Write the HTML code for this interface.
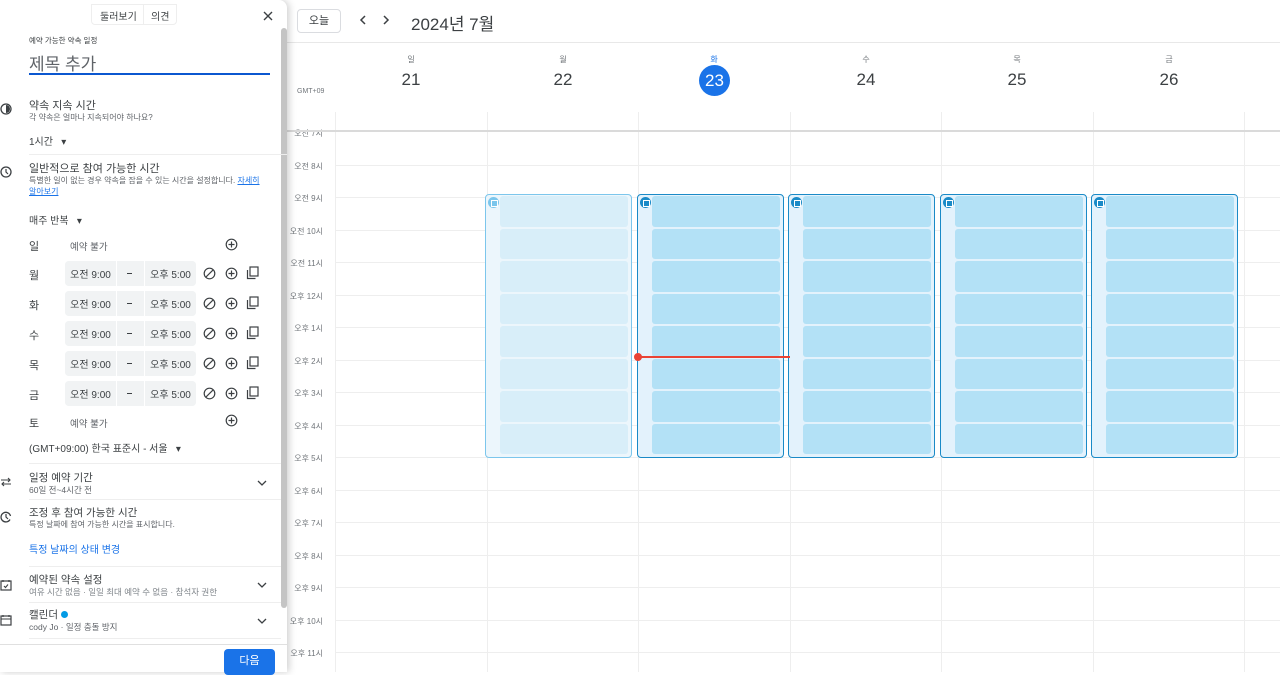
<!DOCTYPE html>
<html><head><meta charset="utf-8"><style>
*{box-sizing:border-box;margin:0;padding:0}
body{width:1280px;height:672px;overflow:hidden;background:#fff;font-family:"Liberation Sans","Noto Sans CJK KR",sans-serif;color:#3c4043;position:relative}
.a{position:absolute}
.panel{left:0;top:0;width:287px;height:672px;background:#fff;box-shadow:2px 0 8px rgba(0,0,0,.2);z-index:5;border-radius:0 8px 0 0}
.t{position:absolute;white-space:nowrap}
.hl{position:absolute;left:335px;right:0;height:1px;background:#eee}
.vl{position:absolute;top:112px;bottom:0;width:1px;background:#eee}
.hr{position:absolute;right:957px;font-size:8px;color:#70757a;text-align:right;width:60px}
.pill{position:absolute;height:25px;background:#f1f3f4;border-radius:4px;font-size:10px;color:#3c4043;display:flex;align-items:center;justify-content:center}
.day{position:absolute;left:29px;font-size:11px;color:#3c4043}
svg{position:absolute}
.blk{position:absolute;top:194px;height:264px;border:1.5px solid #1a8ac7;border-radius:4px;background:#e3f2fc}
.blk.l{border-color:#7cc6ec;background:#ecf6fc}
.slot{position:absolute;left:14px;right:3px;height:30.5px;background:#b3e1f6;border-radius:3px}
.blk.l .slot{background:#d8eef9}
.ic{position:absolute;left:2px;top:2px;width:11px;height:11px;border-radius:50%;background:#1a8ac7}
.blk.l .ic{background:#7cc6ec}
.ic:after{content:"";position:absolute;left:3px;top:3px;width:5px;height:5px;border:1px solid #fff}
.dn{position:absolute;width:150px;text-align:center;font-size:8px;color:#70757a;top:54px}
.dd{position:absolute;width:150px;text-align:center;font-size:17px;color:#3c4043;top:70px}
.chev{position:absolute;left:256px;width:12px;height:12px}
</style></head><body>
<div class="a" style="left:297px;top:9px;width:44px;height:24px;border:1px solid #dadce0;border-radius:4px;font-size:11px;text-align:center;line-height:22px">오늘</div>
<svg style="left:358px;top:14px" width="10" height="12" viewBox="0 0 10 12"><path d="M7 2L3 6L7 10" fill="none" stroke="#3c4043" stroke-width="1.5"/></svg>
<svg style="left:381px;top:14px" width="10" height="12" viewBox="0 0 10 12"><path d="M3 2L7 6L3 10" fill="none" stroke="#3c4043" stroke-width="1.5"/></svg>
<div class="t" style="left:411px;top:10px;font-size:17px;color:#3c4043">2024년 7월</div>
<div class="a" style="left:287px;right:0;top:42px;height:1px;background:#e8e8e8"></div>
<div class="dn" style="left:336px">일</div><div class="dd" style="left:336px">21</div>
<div class="dn" style="left:488px">월</div><div class="dd" style="left:488px">22</div>
<div class="dn" style="left:639px;color:#1a73e8">화</div>
<div class="a" style="left:699px;top:65px;width:31px;height:31px;border-radius:50%;background:#1a73e8;color:#fff;font-size:17px;text-align:center;line-height:31px">23</div>
<div class="dn" style="left:791px">수</div><div class="dd" style="left:791px">24</div>
<div class="dn" style="left:942px">목</div><div class="dd" style="left:942px">25</div>
<div class="dn" style="left:1094px">금</div><div class="dd" style="left:1094px">26</div>
<div class="t" style="left:297px;top:88px;font-size:7px;color:#70757a">GMT+09</div>
<div class="vl" style="left:335px"></div><div class="vl" style="left:487px"></div><div class="vl" style="left:638px"></div><div class="vl" style="left:790px"></div><div class="vl" style="left:941px"></div><div class="vl" style="left:1093px"></div><div class="vl" style="left:1244px"></div>
<div class="hl" style="top:165px"></div><div class="hl" style="top:197px"></div><div class="hl" style="top:230px"></div><div class="hl" style="top:262px"></div><div class="hl" style="top:295px"></div><div class="hl" style="top:327px"></div><div class="hl" style="top:360px"></div><div class="hl" style="top:392px"></div><div class="hl" style="top:425px"></div><div class="hl" style="top:457px"></div><div class="hl" style="top:490px"></div><div class="hl" style="top:522px"></div><div class="hl" style="top:555px"></div><div class="hl" style="top:587px"></div><div class="hl" style="top:620px"></div><div class="hl" style="top:652px"></div>
<div class="hr" style="top:128px">오전 7시</div>
<div class="hr" style="top:161px">오전 8시</div>
<div class="hr" style="top:193px">오전 9시</div>
<div class="hr" style="top:226px">오전 10시</div>
<div class="hr" style="top:258px">오전 11시</div>
<div class="hr" style="top:291px">오후 12시</div>
<div class="hr" style="top:323px">오후 1시</div>
<div class="hr" style="top:356px">오후 2시</div>
<div class="hr" style="top:388px">오후 3시</div>
<div class="hr" style="top:421px">오후 4시</div>
<div class="hr" style="top:453px">오후 5시</div>
<div class="hr" style="top:486px">오후 6시</div>
<div class="hr" style="top:518px">오후 7시</div>
<div class="hr" style="top:551px">오후 8시</div>
<div class="hr" style="top:583px">오후 9시</div>
<div class="hr" style="top:616px">오후 10시</div>
<div class="hr" style="top:648px">오후 11시</div>
<div class="a" style="left:287px;right:0;top:130px;height:2px;background:#dadada"></div>
<div id="blocks"></div>
<div class="a" style="left:638px;top:356px;width:152px;height:1.5px;background:#ea4335;z-index:2"></div>
<div class="a" style="left:634px;top:353px;width:8px;height:8px;border-radius:50%;background:#ea4335;z-index:2"></div>

<div class="a panel">
<div class="a" style="left:91px;top:4px;width:86px;height:21px;border:1px solid #eee;border-radius:0 0 4px 4px"></div>
<div class="a" style="left:143px;top:4px;width:1px;height:21px;background:#eee"></div>
<div class="t" style="left:100px;top:8px;font-size:10px">둘러보기</div>
<div class="t" style="left:151px;top:8px;font-size:10px">의견</div>
<svg style="left:263px;top:11px" width="10" height="10" viewBox="0 0 10 10"><path d="M1 1L9 9M9 1L1 9" stroke="#3c4043" stroke-width="1.4"/></svg>
<div class="a" style="left:281px;top:28px;width:6px;height:580px;background:#c4c4c4;border-radius:3px"></div>
<div class="t" style="left:29px;top:35px;font-size:7.5px;color:#3c4043">예약 가능한 약속 일정</div>
<div class="t" style="left:29px;top:50px;font-size:17px;color:#5f6368">제목 추가</div>
<div class="a" style="left:29px;top:73px;width:241px;height:2px;background:#0b57d0"></div>
<svg style="left:0;top:103px" width="12" height="12" viewBox="0 0 12 12"><circle cx="6" cy="6" r="5" fill="none" stroke="#3c4043" stroke-width="1.3"/><path d="M6 6V2A4 4 0 0 1 6 10Z" fill="#3c4043"/></svg>
<div class="t" style="left:29px;top:97px;font-size:11px">약속 지속 시간</div>
<div class="t" style="left:29px;top:112px;font-size:8px;color:#5f6368">각 약속은 얼마나 지속되어야 하나요?</div>
<div class="t" style="left:29px;top:133px;font-size:10px">1시간 &nbsp;&nbsp;▾</div>
<div class="a" style="left:29px;top:154px;width:258px;height:1px;background:#eee"></div>
<svg style="left:0;top:166px" width="12" height="12" viewBox="0 0 12 12"><circle cx="6" cy="6" r="5" fill="none" stroke="#3c4043" stroke-width="1.3"/><path d="M6 3V6L8 8" fill="none" stroke="#3c4043" stroke-width="1.2"/></svg>
<div class="t" style="left:29px;top:160px;font-size:11px">일반적으로 참여 가능한 시간</div>
<div class="t" style="left:29px;top:175px;font-size:8px;color:#5f6368">특별한 일이 없는 경우 약속을 잡을 수 있는 시간을 설정합니다. <span style="color:#1a73e8;text-decoration:underline">자세히</span></div>
<div class="t" style="left:29px;top:186px;font-size:8px;color:#1a73e8;text-decoration:underline">알아보기</div>
<div class="t" style="left:29px;top:212px;font-size:10px">매주 반복 &nbsp;&nbsp;▾</div>
<div class="day" style="top:238px">일</div><div class="t" style="left:70px;top:239px;font-size:9.5px;color:#5f6368">예약 불가</div>
<svg style="left:225px;top:238px" width="13" height="13" viewBox="0 0 13 13"><circle cx="6.5" cy="6.5" r="5.3" fill="none" stroke="#3c4043" stroke-width="1.2"/><path d="M6.5 3.5V9.5M3.5 6.5H9.5" stroke="#3c4043" stroke-width="1.2"/></svg>
<div id="rows"></div>
<div class="day" style="top:415px">토</div><div class="t" style="left:70px;top:416px;font-size:9.5px;color:#5f6368">예약 불가</div>
<svg style="left:225px;top:414px" width="13" height="13" viewBox="0 0 13 13"><circle cx="6.5" cy="6.5" r="5.3" fill="none" stroke="#3c4043" stroke-width="1.2"/><path d="M6.5 3.5V9.5M3.5 6.5H9.5" stroke="#3c4043" stroke-width="1.2"/></svg>
<div class="t" style="left:29px;top:440px;font-size:10px">(GMT+09:00) 한국 표준시 - 서울 &nbsp;&nbsp;▾</div>
<div class="a" style="left:29px;top:463px;width:252px;height:1px;background:#eee"></div>
<svg style="left:0;top:476px" width="12" height="12" viewBox="0 0 12 12"><path d="M1 4H10M8 2L10 4L8 6M11 8H2M4 6L2 8L4 10" fill="none" stroke="#3c4043" stroke-width="1.1"/></svg>
<div class="t" style="left:29px;top:470px;font-size:10.5px">일정 예약 기간</div>
<div class="t" style="left:29px;top:484px;font-size:8.5px;color:#5f6368">60일 전~4시간 전</div>
<svg class="chev" style="top:477px" viewBox="0 0 12 12"><path d="M2 4L6 8L10 4" fill="none" stroke="#3c4043" stroke-width="1.3"/></svg>
<div class="a" style="left:29px;top:499px;width:252px;height:1px;background:#eee"></div>
<svg style="left:0;top:511px" width="12" height="12" viewBox="0 0 12 12"><path d="M10.5 5A4.8 4.8 0 1 0 10 8.5" fill="none" stroke="#3c4043" stroke-width="1.3"/><path d="M6 3V6L8 8" fill="none" stroke="#3c4043" stroke-width="1.2"/></svg>
<div class="t" style="left:29px;top:505px;font-size:10.5px">조정 후 참여 가능한 시간</div>
<div class="t" style="left:29px;top:519px;font-size:8px;color:#5f6368">특정 날짜에 참여 가능한 시간을 표시합니다.</div>
<div class="t" style="left:29px;top:541px;font-size:10px;color:#1a73e8">특정 날짜의 상태 변경</div>
<div class="a" style="left:29px;top:566px;width:252px;height:1px;background:#eee"></div>
<svg style="left:0;top:579px" width="12" height="12" viewBox="0 0 12 12"><rect x="1" y="2" width="10" height="9" fill="none" stroke="#3c4043" stroke-width="1.2"/><path d="M3 1V3M9 1V3M4 7L5.5 8.5L8 5.5" fill="none" stroke="#3c4043" stroke-width="1.1"/></svg>
<div class="t" style="left:29px;top:572px;font-size:10.5px">예약된 약속 설정</div>
<div class="t" style="left:29px;top:586px;font-size:8.5px;color:#80868b">여유 시간 없음 · 일일 최대 예약 수 없음 · 참석자 권한</div>
<svg class="chev" style="top:579px" viewBox="0 0 12 12"><path d="M2 4L6 8L10 4" fill="none" stroke="#3c4043" stroke-width="1.3"/></svg>
<div class="a" style="left:29px;top:602px;width:252px;height:1px;background:#eee"></div>
<svg style="left:0;top:614px" width="12" height="12" viewBox="0 0 12 12"><rect x="1" y="2" width="10" height="9" fill="none" stroke="#3c4043" stroke-width="1.2"/><path d="M3 1V3M9 1V3M1 5H11" fill="none" stroke="#3c4043" stroke-width="1.1"/></svg>
<div class="t" style="left:29px;top:607px;font-size:10.5px">캘린더 <span style="display:inline-block;width:7px;height:7px;border-radius:50%;background:#039be5"></span></div>
<div class="t" style="left:29px;top:621px;font-size:8.5px;color:#5f6368">cody Jo · 일정 충돌 방지</div>
<svg class="chev" style="top:615px" viewBox="0 0 12 12"><path d="M2 4L6 8L10 4" fill="none" stroke="#3c4043" stroke-width="1.3"/></svg>
<div class="a" style="left:29px;top:638px;width:252px;height:1px;background:#eee"></div>
<div class="a" style="left:0;top:644px;width:287px;height:1px;background:#e0e0e0"></div>
<div class="a" style="left:224px;top:649px;width:51px;height:26px;background:#1a73e8;border-radius:4px;color:#fff;font-size:11px;text-align:center;line-height:24px">다음</div>
</div>
<script>
var r='',days=['월','화','수','목','금'];
for(var i=0;i<5;i++){var y=261+i*30;
r+='<div class="day" style="top:'+(y+6)+'px">'+days[i]+'</div>'+
'<div class="pill" style="left:65px;top:'+y+'px;width:131px"></div>'+
'<div class="pill" style="left:65px;top:'+y+'px;width:51px">오전 9:00</div>'+
'<div class="a" style="left:116px;top:'+y+'px;width:1px;height:25px;background:#fff"></div>'+
'<div class="a" style="left:144px;top:'+y+'px;width:1px;height:25px;background:#fff"></div>'+
'<div class="a" style="left:127px;top:'+(y+12)+'px;width:5px;height:1px;background:#3c4043"></div>'+
'<div class="pill" style="left:145px;top:'+y+'px;width:51px">오후 5:00</div>'+
'<svg style="left:203px;top:'+(y+6)+'px" width="13" height="13" viewBox="0 0 13 13"><circle cx="6.5" cy="6.5" r="5.3" fill="none" stroke="#3c4043" stroke-width="1.2"/><path d="M2.8 10.2L10.2 2.8" stroke="#3c4043" stroke-width="1.2"/></svg>'+
'<svg style="left:225px;top:'+(y+6)+'px" width="13" height="13" viewBox="0 0 13 13"><circle cx="6.5" cy="6.5" r="5.3" fill="none" stroke="#3c4043" stroke-width="1.2"/><path d="M6.5 3.5V9.5M3.5 6.5H9.5" stroke="#3c4043" stroke-width="1.2"/></svg>'+
'<svg style="left:246px;top:'+(y+5)+'px" width="13" height="14" viewBox="0 0 13 14"><rect x="4" y="1" width="8" height="9" fill="none" stroke="#3c4043" stroke-width="1.2"/><path d="M1.5 4V12.5H9.5" fill="none" stroke="#3c4043" stroke-width="1.2"/></svg>';}
document.getElementById('rows').innerHTML=r;
var b='',xs=[485,637,788,940,1091];
for(var k=0;k<5;k++){b+='<div class="blk'+(k==0?' l':'')+'" style="left:'+xs[k]+'px;width:147px"><div class="ic"></div>';
for(var j=0;j<8;j++)b+='<div class="slot" style="top:'+(1+j*32.5)+'px"></div>';b+='</div>';}
document.getElementById('blocks').innerHTML=b;
</script>
</body></html>
